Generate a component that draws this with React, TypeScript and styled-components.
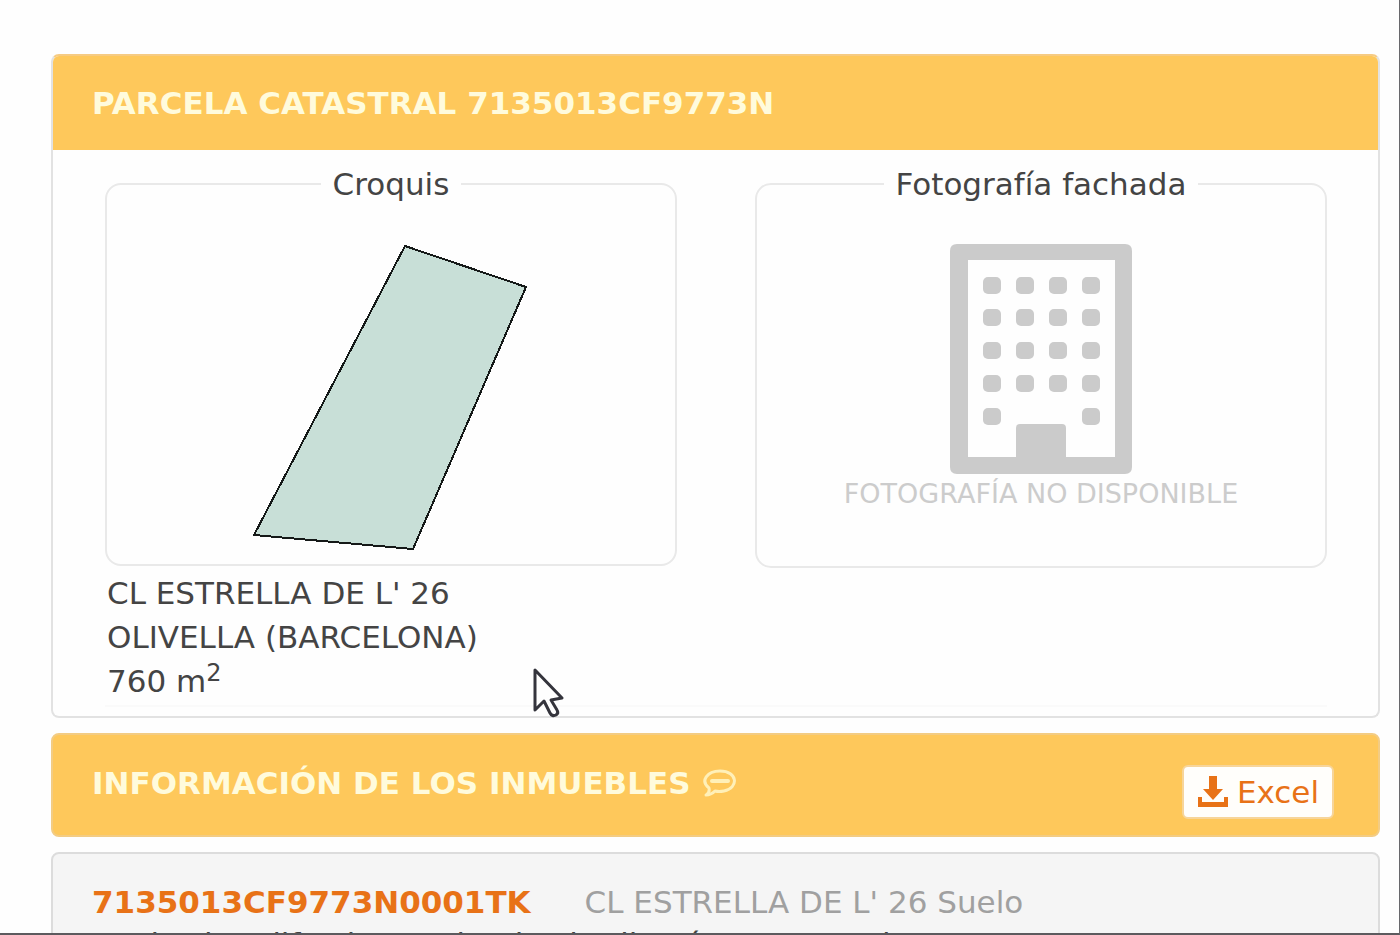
import React from "react";
import styled, { createGlobalStyle } from "styled-components";

const GlobalStyle = createGlobalStyle`
  * { box-sizing: border-box; }
  html { height: 100%; overflow: hidden; }
  body {
    margin: 0;
    height: 100%;
    overflow: hidden;
    background: #fefefe;
    color: #444;
    font-family: "DejaVu Sans", Verdana, sans-serif;
    font-size: 31px;
    line-height: 44px;
  }
`;

const Page = styled.main`
  display: flex;
  flex-direction: column;
  gap: 15px;
  height: 100vh;
  overflow: hidden;
  padding: 54px 19px 0 51px;
  border-right: 1px solid #68686c;
  border-bottom: 2px solid #5c5a5e;
`;

const Panel = styled.section`
  flex-shrink: 0;
  border: 2px solid #e2e2e2;
  border-top-color: #f6cb83;
  border-radius: 8px;
  background: #fefefe;
  overflow: hidden;
`;

const PanelHeader = styled.header<{ $alone?: boolean }>`
  display: flex;
  flex-shrink: 0;
  justify-content: space-between;
  padding: ${(p) => (p.$alone ? "26px 44px 16px 39px" : "25px 39px")};
  background: #fec85b;
  ${(p) => p.$alone && "border: 2px solid #f3cc83; border-radius: 8px;"}
`;

const Title = styled.h2`
  display: flex;
  align-items: center;
  gap: 12px;
  height: 44px;
  margin: 0;
  color: #fffbdc;
  font-size: 31px;
  font-weight: 700;
`;

const PanelBody = styled.div`
  display: grid;
  grid-template-columns: 1fr 1fr;
  align-items: start;
  column-gap: 78px;
  padding: 12px 51px 9px 52px;
`;

const Frame = styled.fieldset<{ $height: number }>`
  display: flex;
  flex-direction: column;
  align-items: center;
  min-width: 0;
  height: ${(p) => p.$height}px;
  margin: 0;
  padding: 38px 0 0;
  border: 2px solid #e9e9e9;
  border-radius: 16px;
`;

const Legend = styled.legend`
  margin: 0 auto;
  padding: 0 12px;
`;

const Caption = styled.p`
  margin: 0;
  color: #ccc;
  font-size: 27px;
  line-height: 40px;
`;

const Address = styled.address`
  grid-column: 1 / -1;
  padding: 3px 2px 2px;
  border-bottom: 2px solid #fafafa;
  font-style: normal;

  sup {
    font-size: 24px;
    line-height: 0;
  }
`;

const HelpIcon = styled.svg`
  width: 34px;
  height: 30px;
`;

const ExcelButton = styled.button`
  display: flex;
  align-items: center;
  gap: 8px;
  height: 54px;
  margin-top: 4px;
  padding: 0 13px;
  border: 2px solid #f7d59a;
  border-radius: 6px;
  background: #fffefb;
  color: #e87217;
  font: inherit;
`;

const Property = styled.article`
  flex-shrink: 0;
  border: 2px solid #dcdcdc;
  border-radius: 8px;
  background: #f5f5f5;
  padding: 27px 39px;
`;

const PropertyHead = styled.div`
  display: flex;
  gap: 54px;
  color: #a0a0a0;
  line-height: 42px;
`;

const RefLink = styled.a`
  color: #e87217;
  font-weight: 700;
  text-decoration: none;
`;

const Details = styled.p`
  margin: 0;
  line-height: 42px;
  white-space: nowrap;
`;

const Pointer = styled.svg`
  position: absolute;
  left: 532px;
  top: 667px;
  width: 34px;
  height: 52px;
`;

const columns = [983, 1016, 1049, 1082];
const rows = [277, 309, 342, 375, 408];

function Sketch() {
  return (
    <svg width="278" height="310" viewBox="252 244 278 310" role="img" aria-label="Croquis de la parcela">
      <path
        d="M405 246 526 287 413 549 254 535Z"
        fill="#c8dfd7"
        stroke="#151918"
        strokeWidth="2"
        shapeRendering="crispEdges"
      />
    </svg>
  );
}

function Building() {
  return (
    <svg width="182" height="230" viewBox="950 244 182 230" fill="#cbcbcb" aria-hidden="true">
      <path
        fillRule="evenodd"
        d="M957 244h168q7 0 7 7v216q0 7-7 7H957q-7 0-7-7V251q0-7 7-7ZM968 260V457H1016V428q0-4 4-4h42q4 0 4 4V457H1115V260Z"
      />
      {rows.map((y, r) =>
        columns
          .filter((_, c) => r < 4 || c === 0 || c === 3)
          .map((x) => <rect key={`${x}-${y}`} x={x} y={y} width="18" height="17" rx="5" />),
      )}
    </svg>
  );
}

export default function App() {
  return (
    <>
      <GlobalStyle />
      <Page>
        <Panel>
          <PanelHeader>
            <Title>PARCELA CATASTRAL 7135013CF9773N</Title>
          </PanelHeader>
          <PanelBody>
            <Frame $height={404}>
              <Legend>Croquis</Legend>
              <Sketch />
            </Frame>
            <Frame $height={406}>
              <Legend>Fotografía fachada</Legend>
              <Building />
              <Caption>FOTOGRAFÍA NO DISPONIBLE</Caption>
            </Frame>
            <Address>
              CL ESTRELLA DE L' 26
              <br />
              OLIVELLA (BARCELONA)
              <br />
              760 m<sup>2</sup>
            </Address>
          </PanelBody>
        </Panel>
        <PanelHeader $alone>
          <Title>
            INFORMACIÓN DE LOS INMUEBLES
            <HelpIcon viewBox="0 0 34 30" fill="none" stroke="#fff0b8" aria-hidden="true">
              <path
                d="M7 20C-2 13 5 3 18 3c18 0 19 17 4 20q-5 1-9 0-4 4-9 4 4-2 3-7Z"
                strokeWidth="3"
                strokeLinejoin="round"
              />
              <path d="M10 13h16" strokeWidth="4" strokeLinecap="round" />
            </HelpIcon>
          </Title>
          <ExcelButton type="button">
            <svg width="32" height="32" viewBox="0 0 32 32" fill="#e87217" aria-hidden="true">
              <path d="M12 0h8v13h6L16 24 6 13h6ZM1 21h4v5h22v-5h4v10H1Z" />
            </svg>
            Excel
          </ExcelButton>
        </PanelHeader>
        <Property>
          <PropertyHead>
            <RefLink href="#inmueble">7135013CF9773N0001TK</RefLink>
            <span>CL ESTRELLA DE L' 26 Suelo</span>
          </PropertyHead>
          <Details>Suelo sin edif., obras urbaniz., jardinería, constr. ruinosa</Details>
        </Property>
        <Pointer viewBox="0 0 34 52" aria-hidden="true">
          <path
            d="M3 3v40l9-9 6 12q2 4 6 2 3-2 1-5l-6-10 11-2Z"
            fill="#fefefe"
            stroke="#34343c"
            strokeWidth="3"
            strokeLinejoin="round"
          />
        </Pointer>
      </Page>
    </>
  );
}
